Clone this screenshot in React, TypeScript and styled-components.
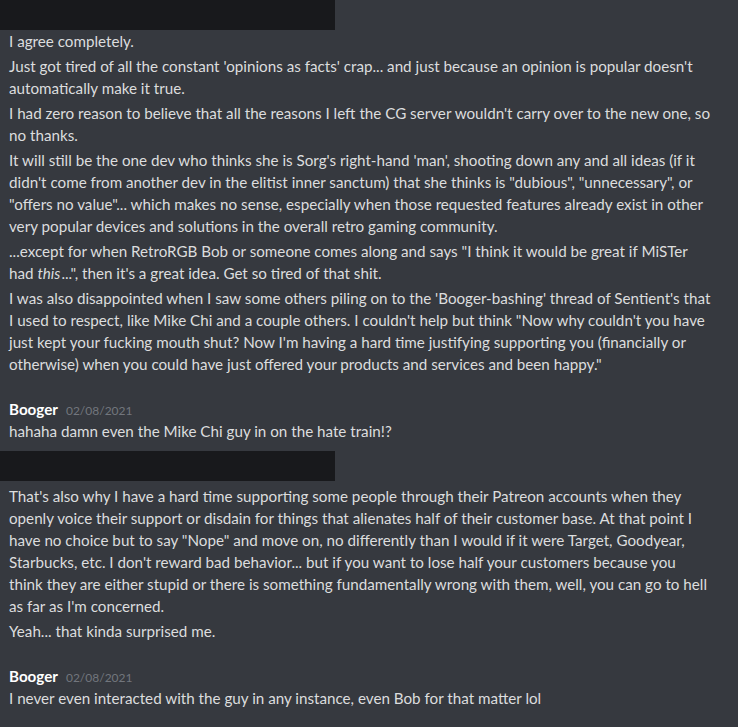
import React from "react";
import styled, { createGlobalStyle } from "styled-components";

const Global = createGlobalStyle`
  html, body { margin: 0; padding: 0; background: #36393f; }
  body { font-family: Lato, "Open Sans", sans-serif; }
`;

const Page = styled.div`
  width: 738px;
  height: 727px;
  background: #36393f;
  overflow: hidden;
  display: flex;
  flex-direction: column;
`;

const Group = styled.section<{ $top: number }>`
  display: flex;
  flex-direction: column;
  margin-top: ${(p) => p.$top}px;
`;

const Redacted = styled.div<{ $gap: number }>`
  width: 335px;
  height: 30px;
  background: #18191c;
  margin-bottom: ${(p) => p.$gap}px;
`;

const Header = styled.div`
  display: flex;
  align-items: baseline;
  gap: 8px;
  padding-left: 9px;
  height: 22px;
  line-height: 22px;
`;

const Name = styled.span`
  color: #ffffff;
  font-weight: 700;
  font-size: 15.2px;
`;

const Stamp = styled.span`
  color: #72767d;
  font-size: 12px;
`;

const Msg = styled.p`
  margin: 0;
  padding: 0 25px 0 9px;
  box-sizing: border-box;
  color: #dcddde;
  font-size: 15.2px;
  line-height: 22px;
  & + & { margin-top: 3px; }
`;

const Em = styled.em`
  font-style: italic;
  padding-right: 1px;
`;

const first = [
  "I agree completely.",
  "Just got tired of all the constant 'opinions as facts' crap... and just because an opinion is popular doesn't automatically make it true.",
  "I had zero reason to believe that all the reasons I left the CG server wouldn't carry over to the new one, so no thanks.",
  "It will still be the one dev who thinks she is Sorg's right-hand 'man', shooting down any and all ideas (if it didn't come from another dev in the elitist inner sanctum) that she thinks is \"dubious\", \"unnecessary\", or \"offers no value\"... which makes no sense, especially when those requested features already exist in other very popular devices and solutions in the overall retro gaming community.",
];

const last1 =
  "I was also disappointed when I saw some others piling on to the 'Booger-bashing' thread of Sentient's that I used to respect, like Mike Chi and a couple others. I couldn't help but think \"Now why couldn't you have just kept your fucking mouth shut? Now I'm having a hard time justifying supporting you (financially or otherwise) when you could have just offered your products and services and been happy.\"";

const third = [
  "That's also why I have a hard time supporting some people through their Patreon accounts when they openly voice their support or disdain for things that alienates half of their customer base. At that point I have no choice but to say \"Nope\" and move on, no differently than I would if it were Target, Goodyear, Starbucks, etc. I don't reward bad behavior... but if you want to lose half your customers because you think they are either stupid or there is something fundamentally wrong with them, well, you can go to hell as far as I'm concerned.",
  "Yeah... that kinda surprised me.",
];

export default function App() {
  return (
    <Page>
      <Global />
      <Group $top={0}>
        <Redacted $gap={0} />
        {first.map((t) => (
          <Msg key={t}>{t}</Msg>
        ))}
        <Msg>
          ...except for when RetroRGB Bob or someone comes along and says "I think it would be great if MiSTer had <Em>this</Em>...", then it's a great idea. Get so tired of that shit.
        </Msg>
        <Msg>{last1}</Msg>
      </Group>
      <Group $top={23}>
        <Header>
          <Name>Booger</Name>
          <Stamp>02/08/2021</Stamp>
        </Header>
        <Msg>hahaha damn even the Mike Chi guy in on the hate train!?</Msg>
      </Group>
      <Group $top={9}>
        <Redacted $gap={4} />
        {third.map((t) => (
          <Msg key={t}>{t}</Msg>
        ))}
      </Group>
      <Group $top={23}>
        <Header>
          <Name>Booger</Name>
          <Stamp>02/08/2021</Stamp>
        </Header>
        <Msg>I never even interacted with the guy in any instance, even Bob for that matter lol</Msg>
      </Group>
    </Page>
  );
}
